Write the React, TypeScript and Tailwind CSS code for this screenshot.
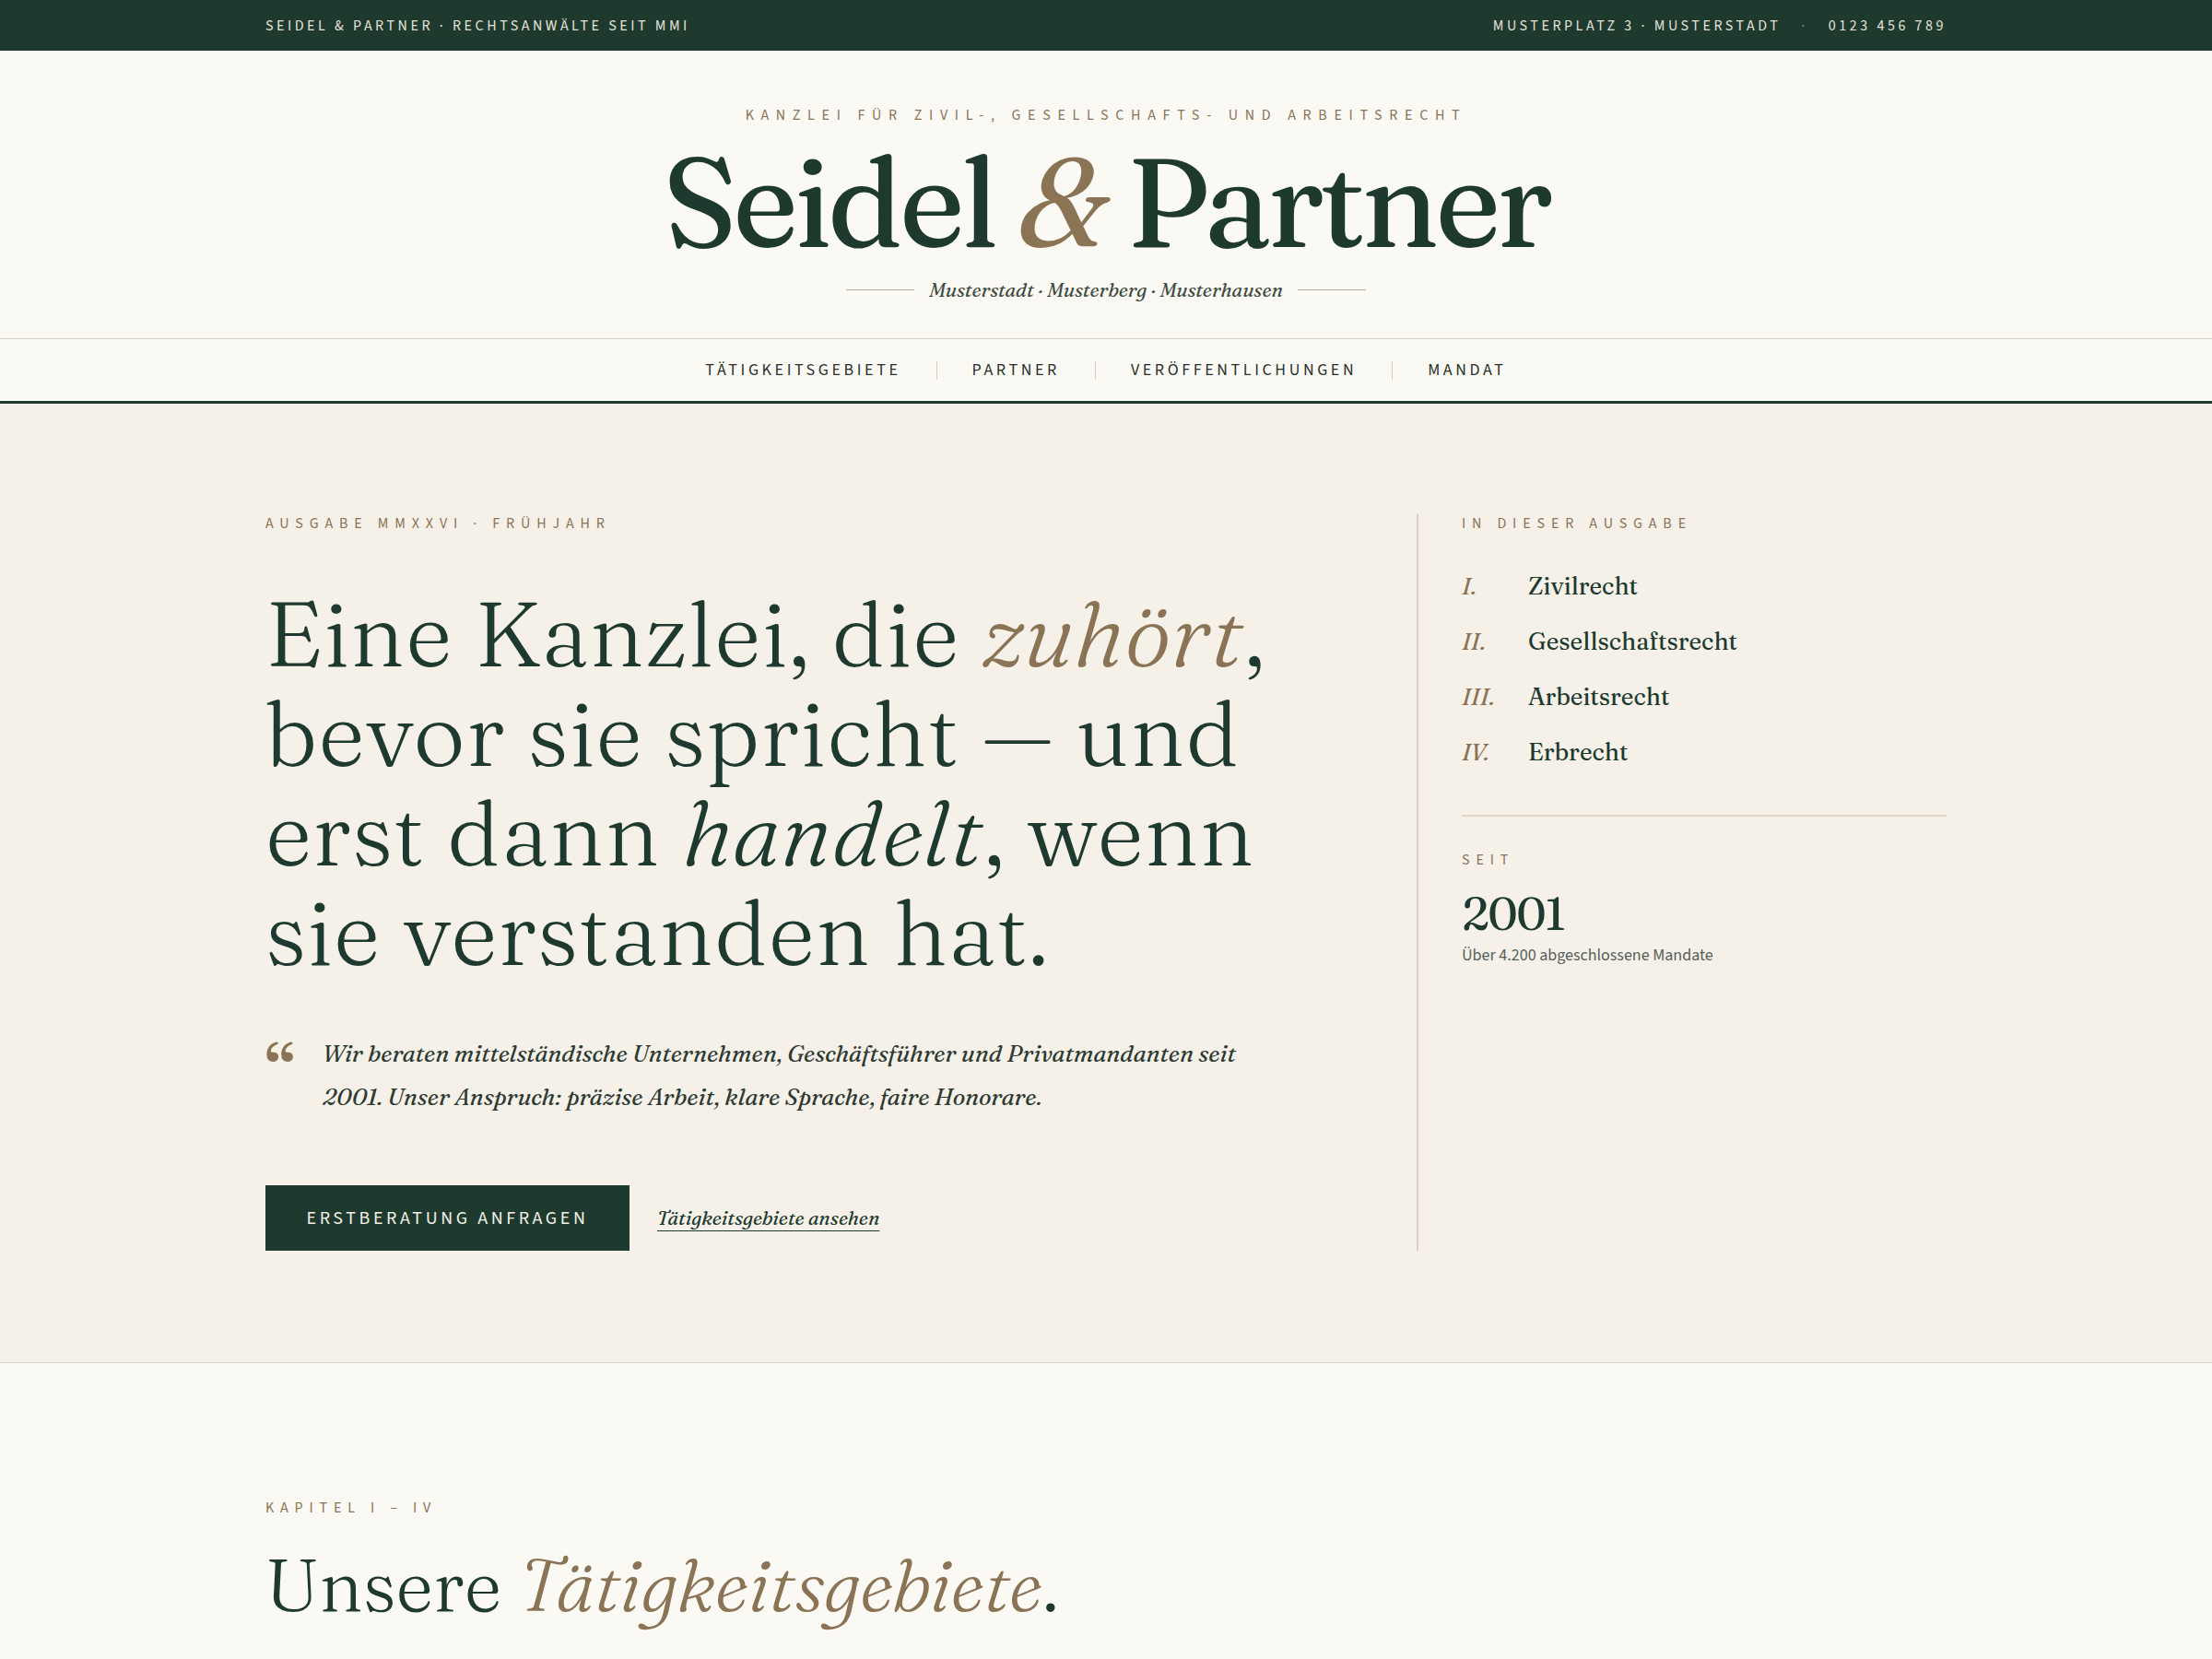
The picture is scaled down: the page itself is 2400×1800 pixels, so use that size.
import React from "react";

const serif = "font-['Fraunces','Source_Serif_4','Noto_Serif','Liberation_Serif',serif] [font-variation-settings:'opsz'_144]";
const sans = "font-['Source_Sans_3','Source_Sans_Pro','Noto_Sans','Liberation_Sans',sans-serif]";

function Kicker({ children, className = "" }: { children: React.ReactNode; className?: string }) {
  return (
    <div className={`${sans} text-[16px] leading-[20px] tracking-[0.43em] uppercase text-[#8b7355] ${className}`}>
      {children}
    </div>
  );
}

export default function App() {
  const chapters = [
    ["I.", "Zivilrecht"],
    ["II.", "Gesellschaftsrecht"],
    ["III.", "Arbeitsrecht"],
    ["IV.", "Erbrecht"],
  ];
  const nav = ["Tätigkeitsgebiete", "Partner", "Veröffentlichungen", "Mandat"];
  return (
    <div className={`${sans} min-h-[1800px] bg-[#fbf9f3] text-[#1e3a2f]`}>
      {/* Top bar */}
      <div className="bg-[#1e3a2f] h-[55px]">
        <div className="mx-auto w-[1824px] h-full flex items-center justify-between text-[16px] tracking-[0.22em] uppercase text-[#e6e2d8]">
          <span>Seidel &amp; Partner · Rechtsanwälte seit MMI</span>
          <div className="flex items-center gap-[22px]">
            <span>Musterplatz 3 · Musterstadt</span>
            <span className="text-[#6f8579]">·</span>
            <span>0123 456 789</span>
          </div>
        </div>
      </div>

      {/* Masthead */}
      <header className="bg-[#fbf9f3] border-b border-[#d8cfc2] pt-[60px] pb-[38px] flex flex-col items-center">
        <Kicker className="tracking-[0.48em]">Kanzlei für Zivil-, Gesellschafts- und Arbeitsrecht</Kicker>
        <h1 className={`${serif} mt-[16px] text-[136px] leading-[136px] font-medium tracking-[-0.035em] text-[#1e3a2f]`}>
          Seidel <span className="italic font-normal text-[#8b7355]">&amp;</span> Partner
        </h1>
        <div className="mt-[12px] flex items-center gap-[16px]">
          <span className="w-[74px] h-px bg-[#b9ad98]" />
          <span className={`${serif} italic text-[21px] leading-[30px] text-[#3f4a43]`}>
            Musterstadt · Musterberg · Musterhausen
          </span>
          <span className="w-[74px] h-px bg-[#b9ad98]" />
        </div>
      </header>

      {/* Nav */}
      <nav className="bg-[#fbf9f3] h-[70px] border-b-[3px] border-[#1e3a2f] flex items-center justify-center">
        {nav.map((n, i) => (
          <React.Fragment key={n}>
            {i > 0 && <span className="mx-[38px] w-px h-[20px] bg-[#d6cdbf]" />}
            <a className="text-[18px] tracking-[0.2em] uppercase text-[#2a2f2b]">{n}</a>
          </React.Fragment>
        ))}
      </nav>

      {/* Hero */}
      <section className="bg-[#f5f1e9] border-b border-[#d8cfc2] pt-[120px] pb-[121px]">
        <div className="mx-auto w-[1824px] grid grid-cols-[1fr_575px] gap-[48px]">
          <div>
            <Kicker>Ausgabe MMXXVI · Frühjahr</Kicker>
            <h2 className={`${serif} mt-[56px] text-[98px] leading-[108px] font-light tracking-[0.01em] text-[#1e3a2f] max-w-[1120px]`}>
              Eine Kanzlei, die <em className="italic text-[#8b7355]">zuhört</em>, bevor sie spricht — und erst dann <em className="italic">handelt</em>, wenn sie verstanden hat.
            </h2>
            <div className="mt-[54px] flex gap-[22px]">
              <span className={`${serif} pt-[10px] text-[68px] leading-[56px] font-semibold text-[#8b7355] w-[40px] h-[47px] shrink-0`}>“</span>
              <p className={`${serif} italic font-normal text-[25.5px] leading-[47px] text-[#2f3a33] max-w-[1010px]`}>
                Wir beraten mittelständische Unternehmen, Geschäftsführer und Privatmandanten seit 2001. Unser Anspruch: präzise Arbeit, klare Sprache, faire Honorare.
              </p>
            </div>
            <div className="mt-[72px] flex items-center gap-[30px]">
              <button className="bg-[#1e3a2f] text-[#f4f0e8] h-[71px] w-[395px] text-[20px] tracking-[0.18em] uppercase">
                Erstberatung anfragen
              </button>
              <a className={`${serif} italic text-[21px] text-[#1e3a2f] underline underline-offset-[6px] decoration-1`}>
                Tätigkeitsgebiete ansehen
              </a>
            </div>
          </div>
          <aside className="border-l-2 border-[#d8cfc2] pl-[47px]">
            <Kicker>In dieser Ausgabe</Kicker>
            <ul className="mt-[39px] flex flex-col gap-[20px]">
              {chapters.map(([num, name]) => (
                <li key={num} className="flex items-baseline h-[40px]">
                  <span className={`${serif} italic text-[26px] text-[#8b7355] w-[72px]`}>{num}</span>
                  <span className={`${serif} text-[26px] text-[#1e3a2f]`}>{name}</span>
                </li>
              ))}
            </ul>
            <div className="mt-[47px] h-[2px] bg-[#ddd5c8]" />
            <Kicker className="mt-[37px] text-[14px]">Seit</Kicker>
            <div className={`${serif} mt-[20px] text-[50px] leading-[56px] tracking-[-0.03em] text-[#1e3a2f]`}>2001</div>
            <div className="mt-[4px] text-[18px] text-[#59605b]">Über 4.200 abgeschlossene Mandate</div>
          </aside>
        </div>
      </section>

      {/* Chapter section */}
      <section className="bg-[#fbf9f3] pt-[147px]">
        <div className="mx-auto w-[1824px]">
          <Kicker>Kapitel I – IV</Kicker>
          <h2 className={`${serif} mt-[24px] text-[79px] leading-[100px] font-light text-[#1e3a2f]`}>
            Unsere <em className="italic text-[#8b7355]">Tätigkeitsgebiete</em>.
          </h2>
        </div>
      </section>
    </div>
  );
}
